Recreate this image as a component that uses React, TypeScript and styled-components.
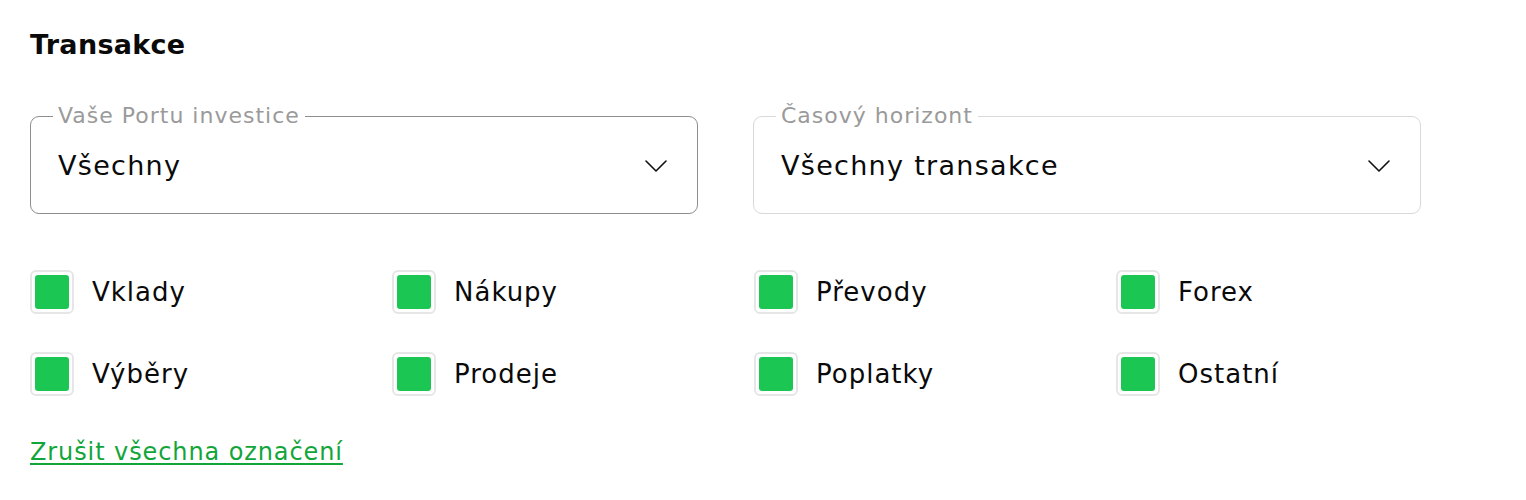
import React from "react";
import styled, { createGlobalStyle } from "styled-components";

const Global = createGlobalStyle`
  html, body { margin: 0; padding: 0; background: #fff; }
  body { font-family: "DejaVu Sans", "Noto Sans", sans-serif; color: #0a0a0a; }
`;

const Page = styled.div`
  padding: 26px 30px 0 30px;
  width: 1526px;
  box-sizing: border-box;
`;

const Title = styled.h2`
  margin: 0;
  font-size: 27px;
  font-weight: 700;
  line-height: 38px;
  letter-spacing: 0.3px;
`;

const SelectRow = styled.div`
  display: grid;
  grid-template-columns: 668px 668px;
  column-gap: 55px;
  margin-top: 39px;
`;

const Field = styled.fieldset<{ $dark?: boolean }>`
  margin: 0;
  padding: 0 30px 0 27px;
  height: 111px;
  box-sizing: border-box;
  border: 1px solid ${(p) => (p.$dark ? "#8e8e8e" : "#d9d9d9")};
  border-radius: 9px;
  display: flex;
  align-items: center;
  justify-content: space-between;
`;

const Legend = styled.legend`
  padding: 0 5px;
  margin-left: -5px;
  font-size: 22px;
  line-height: 26px;
  letter-spacing: 1px;
  color: #9a9a9a;
`;

const Value = styled.span`
  font-size: 27px;
  line-height: 34px;
  letter-spacing: 1.3px;
  color: #0a0a0a;
  margin-top: -11px;
`;

const Chevron = styled.svg`
  width: 22px;
  height: 12px;
  margin-top: -11px;
`;

const Grid = styled.div`
  display: grid;
  grid-template-columns: repeat(4, 362px);
  row-gap: 38px;
  margin-top: 56px;
`;

const Item = styled.label`
  display: flex;
  align-items: center;
  gap: 18px;
  font-size: 26px;
  letter-spacing: 1px;
  line-height: 44px;
`;

const Box = styled.span`
  width: 44px;
  height: 44px;
  box-sizing: border-box;
  border: 2px solid #e6e6e6;
  border-radius: 6px;
  padding: 3px;
  display: flex;
`;

const Fill = styled.span`
  flex: 1;
  background: #1bc653;
  border-radius: 3px;
`;

const Link = styled.a`
  display: inline-block;
  margin-top: 41px;
  font-size: 24px;
  line-height: 30px;
  letter-spacing: 0.9px;
  color: #12a53a;
  text-decoration: underline;
  text-underline-offset: 3px;
  text-decoration-thickness: 1.5px;
`;

const items = ["Vklady", "Nákupy", "Převody", "Forex", "Výběry", "Prodeje", "Poplatky", "Ostatní"];

function Select({ label, value, dark }: { label: string; value: string; dark?: boolean }) {
  return (
    <Field $dark={dark}>
      <Legend>{label}</Legend>
      <Value>{value}</Value>
      <Chevron viewBox="0 0 22 12" fill="none">
        <path d="M1 1 L11 11 L21 1" stroke="#111" strokeWidth="1.6" strokeLinecap="round" strokeLinejoin="round" />
      </Chevron>
    </Field>
  );
}

export default function App() {
  return (
    <>
      <Global />
      <Page>
        <Title>Transakce</Title>
        <SelectRow>
          <Select label="Vaše Portu investice" value="Všechny" dark />
          <Select label="Časový horizont" value="Všechny transakce" />
        </SelectRow>
        <Grid>
          {items.map((t) => (
            <Item key={t}>
              <Box>
                <Fill />
              </Box>
              {t}
            </Item>
          ))}
        </Grid>
        <Link href="#">Zrušit všechna označení</Link>
      </Page>
    </>
  );
}
